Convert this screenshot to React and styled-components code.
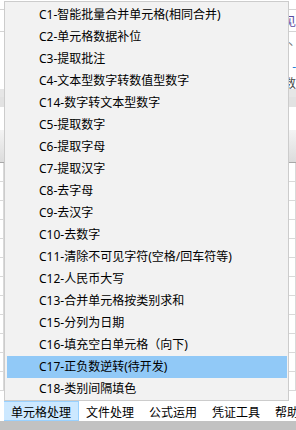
import React from 'react';
import styled, { createGlobalStyle } from 'styled-components';

const GlobalStyle = createGlobalStyle`
    html, body {
        margin: 0;
        padding: 0;
        background: #ffffff;
    }
    body {
        font-family: "Noto Sans", "Noto Sans CJK SC", sans-serif;
        font-size: 12px;
        color: #000;
    }
`;

const Frame = styled.div`
    position: relative;
    width: 296px;
    height: 430px;
    display: flex;
    flex-direction: column;
    overflow: hidden;
    background: #ffffff;
`;

const Sheet = styled.div`
    height: 401px;
    display: flex;
    flex-direction: column;
    background: #ffffff;
`;

const TopLine = styled.div`
    height: ${(p) => p.h}px;
    border-bottom: 1px solid ${(p) => (p.line ? '#d4d4d4' : 'transparent')};
    box-sizing: border-box;
    display: flex;
    justify-content: flex-end;
    align-items: center;
    font-size: 12px;
    color: ${(p) => p.color || '#555'};
`;

const Band = styled.div`
    height: ${(p) => p.h}px;
    background: ${(p) => p.bg};
    border-bottom: 1px solid ${(p) => p.edge || 'transparent'};
    box-sizing: border-box;
`;

const GridRow = styled.div`
    height: 19px;
    border-bottom: 1px solid #d9d9d9;
    box-sizing: border-box;
    display: flex;
    justify-content: space-between;
`;

const GridCell = styled.div`
    width: 3px;
    border-right: 1px solid #d9d9d9;
`;

const Menu = styled.div`
    position: absolute;
    top: 1px;
    left: 4px;
    width: 285px;
    height: 400px;
    box-sizing: border-box;
    background: #f2f2f2;
    border: 1px solid #cccccc;
    padding: 2px 0;
    display: flex;
    flex-direction: column;
    font-family: "Noto Sans", "Noto Sans CJK SC", sans-serif;
`;

const MenuItem = styled.div`
    height: 22px;
    margin: 0 1px 0 2px;
    padding-left: 32px;
    display: flex;
    align-items: center;
    font-size: 12px;
    line-height: 22px;
    white-space: nowrap;
    color: #000;
    background: ${(p) => (p.active ? '#91c9f7' : 'transparent')};
`;

const TabBar = styled.div`
    height: 20px;
    display: flex;
    padding-left: 4px;
    background: #ffffff;
`;

const Tab = styled.div`
    height: 20px;
    box-sizing: border-box;
    padding: 0 7px;
    display: flex;
    align-items: center;
    font-size: 12px;
    white-space: nowrap;
    font-family: "Noto Sans CJK SC", sans-serif;
    background: ${(p) => (p.active ? '#cce8ff' : 'transparent')};
    border: 1px solid ${(p) => (p.active ? '#99d1ff' : 'transparent')};
    border-left: none;
    border-right: ${(p) => (p.active ? '1px solid #99d1ff' : '1px solid transparent')};
`;

const StatusStrip = styled.div`
    flex: 1;
    background: #c2c2c2;
`;

const items = [
    'C1-智能批量合并单元格(相同合并)',
    'C2-单元格数据补位',
    'C3-提取批注',
    'C4-文本型数字转数值型数字',
    'C14-数字转文本型数字',
    'C5-提取数字',
    'C6-提取字母',
    'C7-提取汉字',
    'C8-去字母',
    'C9-去汉字',
    'C10-去数字',
    'C11-清除不可见字符(空格/回车符等)',
    'C12-人民币大写',
    'C13-合并单元格按类别求和',
    'C15-分列为日期',
    'C16-填充空白单元格（向下)',
    'C17-正负数逆转(待开发)',
    'C18-类别间隔填色',
];

const tabs = ['单元格处理', '文件处理', '公式运用', '凭证工具', '帮助'];

export default function App() {
    const rows = Array.from({ length: 12 });
    return (
        <>
            <GlobalStyle />
            <Frame>
                <Sheet>
                    <TopLine h={10} line />
                    <TopLine h={22} line color="#5a4aa0">见</TopLine>
                    <TopLine h={24} color="#777">丶</TopLine>
                    <TopLine h={22} color="#2a7fd4">-</TopLine>
                    <TopLine h={11} color="#444">数</TopLine>
                    <Band h={8} bg="#e6e6e6" />
                    <Band h={10} bg="#e2e2e2" />
                    <Band h={23} bg="#ffffff" />
                    <Band h={33} bg="linear-gradient(#f4f4f4, #dcdcdc)" edge="#a8a8a8" />
                    {rows.map((_, i) => (
                        <GridRow key={i}>
                            <GridCell />
                            <GridCell />
                        </GridRow>
                    ))}
                </Sheet>
                <TabBar>
                    {tabs.map((t, i) => (
                        <Tab key={t} active={i === 0}>{t}</Tab>
                    ))}
                </TabBar>
                <StatusStrip />
                <Menu>
                    {items.map((label) => (
                        <MenuItem key={label} active={label.startsWith('C17')}>
                            {label}
                        </MenuItem>
                    ))}
                </Menu>
            </Frame>
        </>
    );
}
